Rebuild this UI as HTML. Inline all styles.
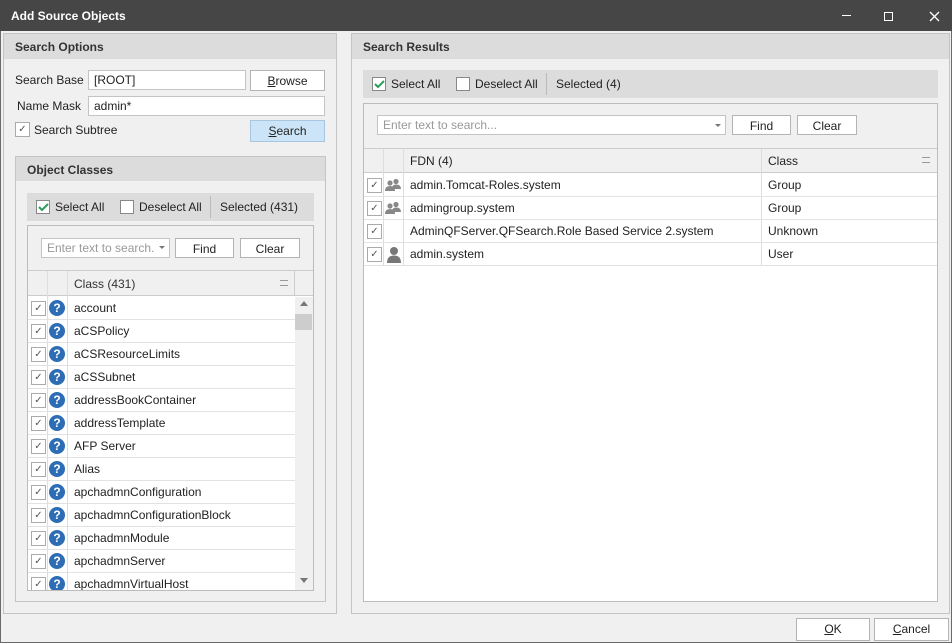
<!DOCTYPE html>
<html><head><meta charset="utf-8"><style>
*{box-sizing:border-box;margin:0;padding:0}
body{width:952px;height:643px;overflow:hidden;background:#f0f0f0;font-family:"Liberation Sans",sans-serif;font-size:12px;color:#222;position:relative}
.a{position:absolute}
.win{left:0;top:0;width:952px;height:643px;border:1px solid #6a6a6a}
.title{left:0;top:0;width:952px;height:31px;background:#464646;color:#fff;font-weight:bold;font-size:12px;padding:9px 0 0 11px}
.panel{border:1px solid #c4c4c4;background:#f0f0f0}
.ph{background:#dcdcdc;font-weight:bold;color:#333;padding:6px 0 0 11px;height:25px}
.inp{background:#fff;border:1px solid #c4c4c4;padding:2px 0 0 5px}
.btn{background:#fff;border:1px solid #b4b4b4;text-align:center;padding-top:3px}
.tb{background:#dcdcdc}
.cb{width:14px;height:14px;border:1px solid #888;background:#fff}
.row{height:23px;border-bottom:1px solid #e2e2e2;position:relative}
.row .t{position:absolute;left:46px;top:4px}
.row .c{position:absolute;left:404px;top:4px}
.ck{width:15px;height:15px;border:1px solid #aaa;background:#fff;font-size:10px;line-height:13px;text-align:center;color:#555}
.q{width:16px;height:16px;border-radius:50%;background:#2d6db5;color:#fff;font-weight:bold;font-size:12px;text-align:center;line-height:16px}
</style></head><body>
<div class="a win"></div>
<div class="a title">Add Source Objects</div>
<div class="a" style="left:842px;top:15px;width:9px;height:1px;background:#fff"></div>
<div class="a" style="left:884px;top:12px;width:9px;height:9px;border:1px solid #fff"></div>
<svg class="a" style="left:929px;top:11px" width="11" height="11"><path d="M1 1L10 10M10 1L1 10" stroke="#fff" stroke-width="1.3"/></svg>

<div class="a panel" style="left:3px;top:33px;width:334px;height:581px"></div>
<div class="a ph" style="left:4px;top:34px;width:332px">Search Options</div>
<div class="a" style="left:15px;top:73px">Search Base</div>
<div class="a inp" style="left:88px;top:70px;width:158px;height:20px">[ROOT]</div>
<div class="a btn" style="left:250px;top:70px;width:75px;height:21px"><u>B</u>rowse</div>
<div class="a" style="left:17px;top:99px">Name Mask</div>
<div class="a inp" style="left:88px;top:96px;width:237px;height:20px">admin*</div>
<div class="a ck" style="left:15px;top:122px">✓</div>
<div class="a" style="left:34px;top:123px">Search Subtree</div>
<div class="a btn" style="left:250px;top:120px;width:75px;height:22px;background:#cce4f7;border-color:#a8c6e0"><u>S</u>earch</div>

<div class="a panel" style="left:15px;top:156px;width:311px;height:446px"></div>
<div class="a ph" style="left:16px;top:157px;width:309px;height:24px;padding-left:11px">Object Classes</div>
<div class="a tb" style="left:27px;top:193px;width:287px;height:28px"></div>
<div class="a cb" style="left:36px;top:200px"></div>
<svg class="a" style="left:38px;top:203px" width="11" height="9"><path d="M1 4L4 7L10 1" stroke="#2a9d5a" stroke-width="2" fill="none"/></svg>
<div class="a" style="left:55px;top:200px">Select All</div>
<div class="a cb" style="left:120px;top:200px"></div>
<div class="a" style="left:139px;top:200px">Deselect All</div>
<div class="a" style="left:210px;top:196px;width:1px;height:22px;background:#bbb"></div>
<div class="a" style="left:220px;top:200px">Selected (431)</div>
<div class="a" style="left:27px;top:225px;width:287px;height:366px;border:1px solid #bcbcbc;background:#f0f0f0"></div>
<div class="a inp" style="left:41px;top:238px;width:129px;height:20px;color:#999">Enter text to search.</div>
<div class="a" style="left:159px;top:246px;width:0;height:0;border-left:3px solid transparent;border-right:3px solid transparent;border-top:3px solid #777"></div>
<div class="a btn" style="left:175px;top:238px;width:59px;height:20px">Find</div>
<div class="a btn" style="left:240px;top:238px;width:60px;height:20px">Clear</div>
<div class="a" style="left:28px;top:270px;width:285px;height:320px;background:#fff;border-top:1px solid #ccc;overflow:hidden">
 <div class="a" style="left:0;top:0;width:285px;height:25px;background:#f0f0f0;border-bottom:1px solid #ccc"></div>
 <div class="a" style="left:46px;top:6px;color:#333">Class (431)</div>
 <div class="a" style="left:252px;top:9px;width:8px;border-top:1px solid #999;height:6px;border-bottom:1px solid #999"></div>
 <div class="a" style="left:19px;top:0;width:1px;height:320px;background:#ddd"></div>
 <div class="a" style="left:39px;top:0;width:1px;height:320px;background:#ddd"></div>
 <div class="a" style="left:266px;top:0;width:1px;height:25px;background:#ccc"></div>
 <div class="a" style="left:267px;top:26px;width:18px;height:294px;background:#f0f0f0"></div>
 <div class="a" style="left:267px;top:43px;width:17px;height:16px;background:#cdcdcd"></div>
 <div class="a" style="left:272px;top:30px;border-left:4px solid transparent;border-right:4px solid transparent;border-bottom:5px solid #777"></div>
 <div class="a" style="left:272px;top:307px;border-left:4px solid transparent;border-right:4px solid transparent;border-top:5px solid #777"></div>
 <div class="a" style="left:0;top:26px;width:267px">
  <div class="row"><div class="a ck" style="left:3px;top:4px">✓</div><div class="a q" style="left:21px;top:3px">?</div><div class="t">account</div></div>
  <div class="row"><div class="a ck" style="left:3px;top:4px">✓</div><div class="a q" style="left:21px;top:3px">?</div><div class="t">aCSPolicy</div></div>
  <div class="row"><div class="a ck" style="left:3px;top:4px">✓</div><div class="a q" style="left:21px;top:3px">?</div><div class="t">aCSResourceLimits</div></div>
  <div class="row"><div class="a ck" style="left:3px;top:4px">✓</div><div class="a q" style="left:21px;top:3px">?</div><div class="t">aCSSubnet</div></div>
  <div class="row"><div class="a ck" style="left:3px;top:4px">✓</div><div class="a q" style="left:21px;top:3px">?</div><div class="t">addressBookContainer</div></div>
  <div class="row"><div class="a ck" style="left:3px;top:4px">✓</div><div class="a q" style="left:21px;top:3px">?</div><div class="t">addressTemplate</div></div>
  <div class="row"><div class="a ck" style="left:3px;top:4px">✓</div><div class="a q" style="left:21px;top:3px">?</div><div class="t">AFP Server</div></div>
  <div class="row"><div class="a ck" style="left:3px;top:4px">✓</div><div class="a q" style="left:21px;top:3px">?</div><div class="t">Alias</div></div>
  <div class="row"><div class="a ck" style="left:3px;top:4px">✓</div><div class="a q" style="left:21px;top:3px">?</div><div class="t">apchadmnConfiguration</div></div>
  <div class="row"><div class="a ck" style="left:3px;top:4px">✓</div><div class="a q" style="left:21px;top:3px">?</div><div class="t">apchadmnConfigurationBlock</div></div>
  <div class="row"><div class="a ck" style="left:3px;top:4px">✓</div><div class="a q" style="left:21px;top:3px">?</div><div class="t">apchadmnModule</div></div>
  <div class="row"><div class="a ck" style="left:3px;top:4px">✓</div><div class="a q" style="left:21px;top:3px">?</div><div class="t">apchadmnServer</div></div>
  <div class="row"><div class="a ck" style="left:3px;top:4px">✓</div><div class="a q" style="left:21px;top:3px">?</div><div class="t">apchadmnVirtualHost</div></div>
 </div>
</div>

<div class="a panel" style="left:351px;top:33px;width:599px;height:581px"></div>
<div class="a ph" style="left:352px;top:34px;width:597px">Search Results</div>
<div class="a tb" style="left:363px;top:70px;width:575px;height:28px"></div>
<div class="a cb" style="left:372px;top:77px"></div>
<svg class="a" style="left:374px;top:80px" width="11" height="9"><path d="M1 4L4 7L10 1" stroke="#2a9d5a" stroke-width="2" fill="none"/></svg>
<div class="a" style="left:391px;top:77px">Select All</div>
<div class="a cb" style="left:456px;top:77px"></div>
<div class="a" style="left:475px;top:77px">Deselect All</div>
<div class="a" style="left:546px;top:73px;width:1px;height:22px;background:#bbb"></div>
<div class="a" style="left:556px;top:77px">Selected (4)</div>
<div class="a" style="left:363px;top:103px;width:575px;height:499px;border:1px solid #bcbcbc;background:#f0f0f0"></div>
<div class="a inp" style="left:377px;top:115px;width:349px;height:20px;color:#999">Enter text to search...</div>
<div class="a" style="left:715px;top:124px;border-left:3px solid transparent;border-right:3px solid transparent;border-top:3px solid #777"></div>
<div class="a btn" style="left:732px;top:115px;width:59px;height:20px">Find</div>
<div class="a btn" style="left:797px;top:115px;width:60px;height:20px">Clear</div>
<div class="a" style="left:364px;top:148px;width:573px;height:453px;background:#fff;border-top:1px solid #ccc">
 <div class="a" style="left:0;top:0;width:573px;height:24px;background:#f0f0f0;border-bottom:1px solid #ccc"></div>
 <div class="a" style="left:46px;top:5px">FDN (4)</div>
 <div class="a" style="left:404px;top:5px">Class</div>
 <div class="a" style="left:558px;top:8px;width:8px;height:6px;border-top:1px solid #999;border-bottom:1px solid #999"></div>
 <div class="a" style="left:19px;top:0;width:1px;height:117px;background:#ddd"></div>
 <div class="a" style="left:39px;top:0;width:1px;height:117px;background:#ddd"></div>
 <div class="a" style="left:397px;top:0;width:1px;height:117px;background:#ddd"></div>
 <div class="a" style="left:0;top:25px;width:573px">
  <div class="row"><div class="a ck" style="left:3px;top:4px">✓</div>
   <svg class="a" style="left:21px;top:4px" width="17" height="14"><circle cx="5" cy="5" r="2.6" fill="#888"/><path d="M0 13Q0 8 5 8Q10 8 10 13Z" fill="#888"/><circle cx="11" cy="3.5" r="2.6" fill="#888"/><path d="M7 11Q7 6.5 11 6.5Q16 6.5 16 11Z" fill="#888"/></svg>
   <div class="t">admin.Tomcat-Roles.system</div><div class="c">Group</div></div>
  <div class="row"><div class="a ck" style="left:3px;top:4px">✓</div>
   <svg class="a" style="left:21px;top:4px" width="17" height="14"><circle cx="5" cy="5" r="2.6" fill="#888"/><path d="M0 13Q0 8 5 8Q10 8 10 13Z" fill="#888"/><circle cx="11" cy="3.5" r="2.6" fill="#888"/><path d="M7 11Q7 6.5 11 6.5Q16 6.5 16 11Z" fill="#888"/></svg>
   <div class="t">admingroup.system</div><div class="c">Group</div></div>
  <div class="row"><div class="a ck" style="left:3px;top:4px">✓</div>
   <div class="t">AdminQFServer.QFSearch.Role Based Service 2.system</div><div class="c">Unknown</div></div>
  <div class="row"><div class="a ck" style="left:3px;top:4px">✓</div>
   <svg class="a" style="left:22px;top:3px" width="16" height="17"><circle cx="8" cy="5" r="4" fill="#777"/><path d="M1 17Q1 9.5 8 9.5Q15 9.5 15 17Z" fill="#777"/></svg>
   <div class="t">admin.system</div><div class="c">User</div></div>
 </div>
</div>

<div class="a btn" style="left:796px;top:618px;width:74px;height:23px"><u>O</u>K</div>
<div class="a btn" style="left:874px;top:618px;width:75px;height:23px"><u>C</u>ancel</div>
</body></html>
